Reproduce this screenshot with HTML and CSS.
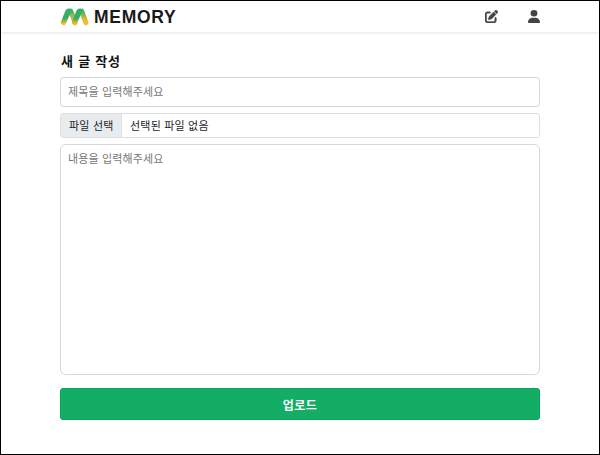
FILE: index.html
```html
<!DOCTYPE html>
<html lang="ko">
<head>
<meta charset="utf-8">
<title>MEMORY</title>
<link rel="stylesheet" href="styles.css">
</head>
<body>
<header class="header">
  <a class="brand">
    <svg class="logo" viewBox="0 0 29 18" width="29" height="18" aria-hidden="true">
      <defs>
        <linearGradient id="rise" gradientUnits="userSpaceOnUse" x1="0" y1="1" x2="0" y2="17">
          <stop offset=".6" stop-color="#35ae69"/><stop offset=".78" stop-color="#a9b644"/><stop offset=".9" stop-color="#f3bd20"/>
        </linearGradient>
        <linearGradient id="fall" gradientUnits="userSpaceOnUse" x1="0" y1="1" x2="0" y2="17">
          <stop offset=".15" stop-color="#45b268"/><stop offset=".45" stop-color="#a6b74b"/><stop offset=".75" stop-color="#f4bd20"/>
        </linearGradient>
      </defs>
      <path d="M7 .8h3.500q2 0 2.700 1.800l4.300 11a2.500 2.500 0 0 1-4.700 1.900z" fill="url(#fall)"/>
      <path d="M18 .8h3.500q2 0 2.700 1.800l4 11a2.500 2.500 0 0 1-4.700 1.900z" fill="url(#fall)"/>
      <path d="M12.500 .8H8.300Q6.300 .8 5.500 2.600L1.100 13.500a2.500 2.500 0 0 0 4.700 2z" fill="url(#rise)"/>
      <path d="M23.500 .8H19.300Q17.300 .8 16.500 2.600L12.100 13.500a2.500 2.500 0 0 0 4.700 2z" fill="url(#rise)"/>
    </svg>
    <span class="name">MEMORY</span>
  </a>
  <nav class="nav">
    <svg width="13" height="13" viewBox="0 0 512 512" fill="currentColor" stroke="currentColor" stroke-width="14" aria-hidden="true"><path d="M471.600 21.700c-21.900-21.900-57.300-21.900-79.200 0L362.300 51.700l97.900 97.900 30.100-30.100c21.900-21.900 21.900-57.300 0-79.200L471.600 21.700zM172.400 241.700c-6.100 6.100-10.800 13.600-13.500 21.900l-29.600 88.800c-2.900 8.600-.6 18.100 5.800 24.600s15.900 8.700 24.600 5.800l88.800-29.600c8.200-2.700 15.700-7.400 21.900-13.500L437.700 172.300 339.700 74.300 172.400 241.700zM96 64C43 64 0 107 0 160v256c0 53 43 96 96 96h256c53 0 96-43 96-96v-96c0-17.700-14.300-32-32-32s-32 14.300-32 32v96c0 17.700-14.300 32-32 32H96c-17.700 0-32-14.300-32-32V160c0-17.700 14.300-32 32-32h96c17.700 0 32-14.300 32-32s-14.300-32-32-32H96z"/></svg>
    <svg width="12" height="13" viewBox="0 0 448 512" preserveAspectRatio="none" fill="currentColor" aria-hidden="true"><path d="M224 256a128 128 0 1 0 0-256 128 128 0 1 0 0 256zm-45.700 48C79.800 304 0 383.800 0 482.300 0 498.700 13.300 512 29.700 512h388.600c16.400 0 29.700-13.300 29.700-29.700C448 383.800 368.200 304 269.700 304h-91.400z"/></svg>
  </nav>
</header>
<main class="form">
  <h1 class="title">새 글 작성</h1>
  <input class="subject" type="text" placeholder="제목을 입력해주세요">
  <label class="file"><span class="choose">파일 선택</span><span class="chosen">선택된 파일 없음</span></label>
  <textarea class="content" placeholder="내용을 입력해주세요"></textarea>
  <button class="upload" type="button">업로드</button>
</main>
</body>
</html>
```
FILE: styles.css
```css
* { box-sizing: border-box; }
body {
  margin: 0;
  height: 455px;
  border: 1px solid #000;
  background: #fff;
  color: #212529;
  font-family: "Liberation Sans", "Noto Sans CJK KR", sans-serif;
  font-size: 11px;
  overflow: hidden;
}
.header {
  height: 31px;
  padding: 0 59px;
  display: flex;
  align-items: center;
  justify-content: space-between;
  box-shadow: 0 1px 3px rgba(0, 0, 0, .1);
}
.brand { display: flex; align-items: center; gap: 5px; }
.logo { display: block; }
.name {
  color: #191919;
  font: bold 17.5px/20px "Liberation Sans", sans-serif;
  letter-spacing: .7px;
}
.nav { display: flex; gap: 30px; color: #444; }
.form { display: flex; flex-direction: column; padding: 20px 59px 0; }
.title {
  margin: 0 0 5px 1px;
  height: 20px;
  color: #111;
  font-size: 13px;
  line-height: 20px;
  font-weight: 700;
  letter-spacing: .8px;
}
.subject, .content {
  display: block;
  width: 100%;
  border: 1px solid #d5d7d9;
  background: #fff;
  font: inherit;
  color: inherit;
  letter-spacing: .15px;
  outline: none;
}
.subject { height: 30px; padding: 0 7px; border-radius: 4px; }
.subject::placeholder, .content::placeholder { color: #777; opacity: 1; }
.file {
  display: flex;
  height: 25px;
  margin-top: 6px;
  border: 1px solid #dbdfe2;
  border-radius: 3px;
  overflow: hidden;
  line-height: 24px;
  letter-spacing: .2px;
}
.choose {
  width: 61px;
  padding-left: 8px;
  background: #e9ecef;
  border-right: 1px solid #dee2e6;
  white-space: nowrap;
}
.chosen { padding-left: 8px; }
.content {
  height: 231px;
  margin-top: 6px;
  padding: 6px 7px;
  border-radius: 6px;
  line-height: 16px;
  resize: none;
}
.upload {
  height: 32px;
  margin-top: 13px;
  padding: 1px 0 0;
  border: 1px solid #08a65a;
  border-radius: 3px;
  background: #13ad65;
  color: #fff;
  font: bold 12px "Noto Sans CJK KR", sans-serif;
  letter-spacing: .5px;
}
```
